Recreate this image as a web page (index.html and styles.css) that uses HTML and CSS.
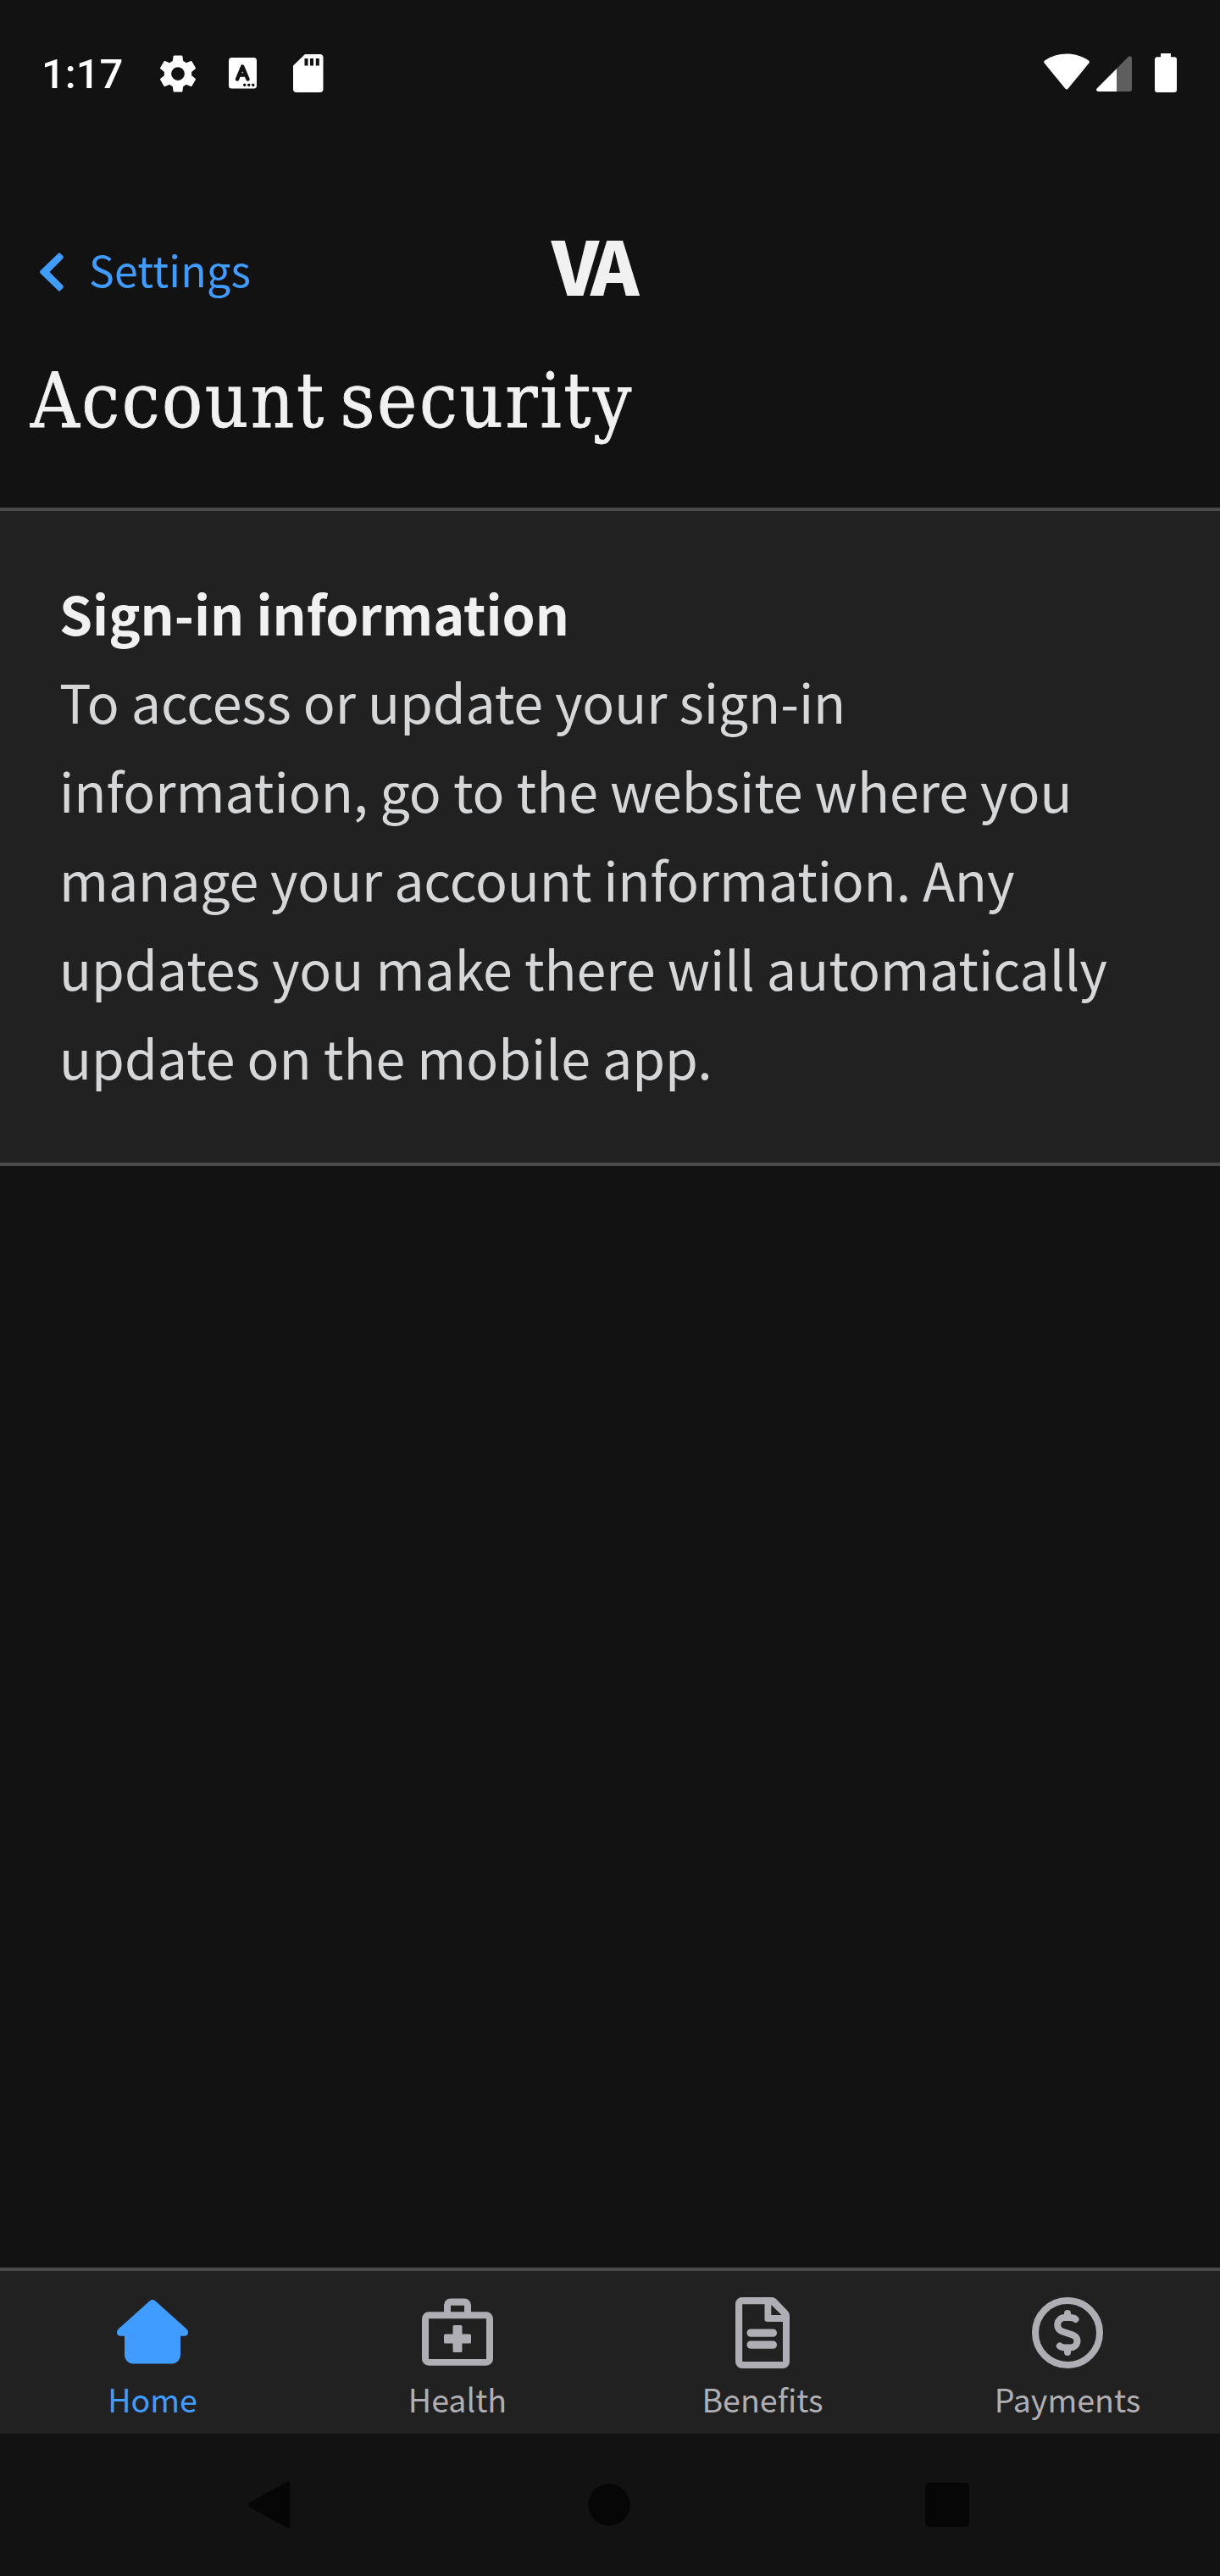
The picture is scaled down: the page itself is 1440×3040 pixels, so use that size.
FILE: index.html
```html
<!DOCTYPE html>
<html lang="en">
<head>
<meta charset="utf-8">
<title>Account security</title>
<link rel="stylesheet" href="styles.css">
</head>
<body>
<div class="screen">
  <div class="status-bar">
    <span class="clock">1:17</span>
    <svg class="status-icon gear" width="54" height="54" viewBox="0 0 24 24"><path d="M19.14 12.94c.04-.3.06-.61.06-.94 0-.32-.02-.64-.07-.94l2.03-1.58c.18-.14.23-.41.12-.61l-1.92-3.32c-.12-.22-.37-.29-.59-.22l-2.39.96c-.5-.38-1.03-.7-1.62-.94l-.36-2.54c-.04-.24-.24-.41-.48-.41h-3.84c-.24 0-.43.17-.47.41l-.36 2.54c-.59.24-1.13.57-1.62.94l-2.39-.96c-.22-.08-.47 0-.59.22L2.74 8.87c-.12.21-.08.47.12.61l2.03 1.58c-.05.3-.09.63-.09.94s.02.64.07.94l-2.03 1.58c-.18.14-.23.41-.12.61l1.92 3.32c.12.22.37.29.59.22l2.39-.96c.5.38 1.03.7 1.62.94l.36 2.54c.05.24.24.41.48.41h3.84c.24 0 .44-.17.47-.41l.36-2.54c.59-.24 1.13-.56 1.62-.94l2.39.96c.22.08.47 0 .59-.22l1.92-3.32c.12-.22.07-.47-.12-.61l-2.01-1.58zM12 15.5a3.5 3.5 0 1 1 0-7 3.5 3.5 0 0 1 0 7z"/></svg>
    <svg class="status-icon keyboard" width="33" height="37" viewBox="0 0 33 37"><rect width="33" height="36.5" rx="3.5"/><path class="cut-line" d="M10 25.5 16.2 10.500 22.500 25.500M12 20.500h8.500"/><g class="cut"><circle cx="18.700" cy="32.300" r="1.700"/><circle cx="23.700" cy="32.300" r="1.700"/><circle cx="28.700" cy="32.300" r="1.700"/></g></svg>
    <svg class="status-icon sd" width="36" height="45" viewBox="0 0 36 45"><path d="M14 0H31.500a4 4 0 0 1 4 4V41a4 4 0 0 1-4 4H4a4 4 0 0 1-4-4V13.500z"/><path class="cut" d="M13.500 5h4v8.500h-4zM20 5h4v8.500h-4zM26.800 5h4v8.500h-4z"/></svg>
    <svg class="status-icon wifi" width="54" height="44" viewBox="0 0 54 44"><path d="M1 8.500C16-2.300 38-2.300 53 8.500c1 1 1 2 .3 3L28.500 41.700q-1.500 1.600-3 0L.7 11.500c-.7-1-.6-2 .3-3z"/></svg>
    <svg class="status-icon signal" width="42" height="42" viewBox="0 0 42 42"><path class="dim" d="M24 15 37.500 1.200C39.500-.8 42 .3 42 3v36a3 3 0 0 1-3 3H24z"/><path d="M24 15V42H2.500C.3 42-.8 39.800.8 38.200z"/></svg>
    <svg class="status-icon battery" width="26" height="46" viewBox="0 0 26 46"><path d="M7 0H19V4.300H23a3 3 0 0 1 3 3V43a3 3 0 0 1-3 3H3a3 3 0 0 1-3-3V7.300a3 3 0 0 1 3-3H7z"/></svg>
  </div>

  <header class="header">
    <a class="back">
      <svg width="28" height="46" viewBox="0 0 28 46"><path d="M21.500 1.200c1-1.100 2-1.100 3 0l2.600 2.700c1 1.100 1 2.300 0 3.400L11.500 23 27.100 38.700c1 1.100 1 2.300 0 3.400l-2.600 2.700c-1 1.100-2 1.100-3 0L.8 24.700c-1-1.100-1-2.300 0-3.400z"/></svg>
      <span>Settings</span>
    </a>
    <span class="logo">VA</span>
  </header>
  <h1 class="title">Account security</h1>

  <section class="card">
    <h2 class="card-heading">Sign-in information</h2>
    <p class="card-text"><span class="snug">To access or update your sign-in</span> information, go to the website where you <span class="snugger">manage your account information. Any</span> updates you make there will automatically update on the mobile app.</p>
  </section>

  <nav class="tabs">
    <a class="tab active">
      <svg width="84" height="84" viewBox="0 0 84 84"><path d="M38.800 4.200q3.200-2.600 6.400 0L82 37.200c4 4 1.500 8.500-2 8.500H75V68.500a10 10 0 0 1-10 10H19a10 10 0 0 1-10-10V45.700H4c-3.500 0-6-4.500-2-8.500z"/></svg>
      <span>Home</span>
    </a>
    <a class="tab">
      <svg width="84" height="84" viewBox="0 0 84 84"><path fill-rule="evenodd" d="M8 17.300H26V9.500a8 8 0 0 1 8-8H50a8 8 0 0 1 8 8v7.800H76a8 8 0 0 1 8 8V72.700a8 8 0 0 1-8 8H8a8 8 0 0 1-8-8V25.300a8 8 0 0 1 8-8zM34 9.700V17.300H50V9.700zM8 25.300V73H76V25.300z"/><path d="M38 33h8a1.500 1.500 0 0 1 1.500 1.500V43.500h9A1.500 1.500 0 0 1 58 45v8a1.500 1.500 0 0 1-1.500 1.500h-9v9A1.500 1.500 0 0 1 46 65H38a1.500 1.500 0 0 1-1.500-1.500v-9h-9A1.500 1.500 0 0 1 26 53V45a1.500 1.500 0 0 1 1.500-1.500h9v-9A1.500 1.500 0 0 1 38 33z"/></svg>
      <span>Health</span>
    </a>
    <a class="tab">
      <svg width="84" height="84" viewBox="0 0 84 84"><path fill-rule="evenodd" d="M18 0H53q3 0 5 2L71.500 16Q74 18.500 74 22V76a8 8 0 0 1-8 8H18a8 8 0 0 1-8-8V8a8 8 0 0 1 8-8zM18.200 8.200V76H66V29H47.500a3 3 0 0 1-3-3V8.200zM52.300 9V21H64.500z"/><rect x="23.500" y="37.500" width="35.500" height="9.300" rx="4.600"/><rect x="23.500" y="51.500" width="35.500" height="9.300" rx="4.600"/></svg>
      <span>Benefits</span>
    </a>
    <a class="tab">
      <svg width="84" height="84" viewBox="0 0 84 84"><g class="line"><circle cx="42" cy="42" r="38"/><path d="M42 19V24M42 60V65"/><path d="M51.500 26Q49.500 24 45 24H39C29 24 27 37.500 36 40.500L48 44.500C57 47.500 54 59.500 45.500 59.500H39Q35 59.500 32.800 57.500"/></g></svg>
      <span>Payments</span>
    </a>
  </nav>

  <div class="system-nav">
    <svg width="50" height="56" viewBox="0 0 50 56"><path d="M1.200 30.500Q-1.200 28 1.200 25.500L45 1.300Q49.500-1.500 49.500 3V53Q49.500 57.500 45 54.700z"/></svg>
    <svg class="home-button" width="50" height="50" viewBox="0 0 50 50"><circle cx="25" cy="25" r="24.700"/></svg>
    <svg width="52" height="52" viewBox="0 0 52 52"><rect width="52" height="52" rx="5"/></svg>
  </div>
</div>
</body>
</html>
```
FILE: styles.css
```css
* { box-sizing: border-box; }

body {
  margin: 0;
  background: #121212;
  color: #f1f1f1;
  font-family: "Noto Sans CJK JP", "Noto Sans CJK SC", "Noto Sans", sans-serif;
}

svg { display: block; flex: none; fill: currentColor; }

.screen {
  display: flex;
  flex-direction: column;
  width: 1440px;
  height: 3040px;
}

/* Status bar */
.status-bar {
  display: flex;
  align-items: flex-start;
  height: 266px;
  padding: 63px 51px 0 49px;
  color: #fff;
}
.clock {
  width: 134px;
  font: 500 49px/50px Roboto, sans-serif;
}
.gear { margin-top: -3px; }
.keyboard { margin: 5px 0 0 33px; }
.sd { margin: 1px 0 0 43px; }
.wifi { margin-left: auto; }
.signal { margin: 3px 0 0 8px; }
.battery { margin-left: 27px; }
.cut { fill: #121212; }
.cut-line { fill: none; stroke: #121212; stroke-width: 4.5; stroke-linecap: round; stroke-linejoin: round; }
.dim { fill: #5e5e5e; }

/* Header */
.header {
  display: grid;
  grid-template-columns: 604px auto 1fr;
  align-items: center;
  height: 110px;
  padding: 0 47px;
}
.back {
  display: flex;
  align-items: center;
  gap: 30px;
  color: #409cff;
  font-size: 50px;
  line-height: 72px;
}
.back span {
  margin-top: -8px;
  letter-spacing: 0.2px;
}
.logo {
  margin-top: -20px;
  font-size: 87px;
  font-weight: 900;
  line-height: 90px;
  letter-spacing: -8px;
}
.title {
  height: 223px;
  margin: 0;
  padding: 42px 0 0 36px;
  font: 400 89px/110px "DejaVu Serif Condensed", "DejaVu Serif", serif;
  font-stretch: condensed;
  letter-spacing: 2.5px;
  word-spacing: -11px;
  -webkit-text-stroke: 0.8px currentColor;
  white-space: nowrap;
}

/* Card */
.card {
  height: 777px;
  padding: 67px 70px 0;
  background: #212121;
  border: solid #4a4a4a;
  border-width: 4px 0;
}
.card-heading, .card-text {
  margin: 0;
  font-size: 62.7px;
  line-height: 105px;
}
.card-heading { font-weight: 700; }
.card-text {
  margin-top: -1px;
  color: #d6d7d9;
}
.snug { letter-spacing: -0.08px; }
.snugger { letter-spacing: -0.14px; }

/* Tabs */
.tabs {
  display: grid;
  grid-template-columns: repeat(4, 1fr);
  height: 196px;
  margin-top: auto;
  background: #212121;
  border-top: 4px solid #4a4a4a;
}
.tab {
  display: flex;
  flex-direction: column;
  align-items: center;
  padding-top: 31px;
  color: #aeaeb4;
  font-size: 37.6px;
  line-height: 54px;
}
.tab span { margin-top: 9px; }
.tab.active { color: #409cff; }
.line { fill: none; stroke: currentColor; stroke-width: 8; stroke-linecap: round; }

/* System navigation */
.system-nav {
  display: flex;
  justify-content: space-between;
  align-items: center;
  height: 168px;
  padding: 0 296px 0 293px;
  color: #060606;
}
.home-button { margin-left: 3px; }
```
